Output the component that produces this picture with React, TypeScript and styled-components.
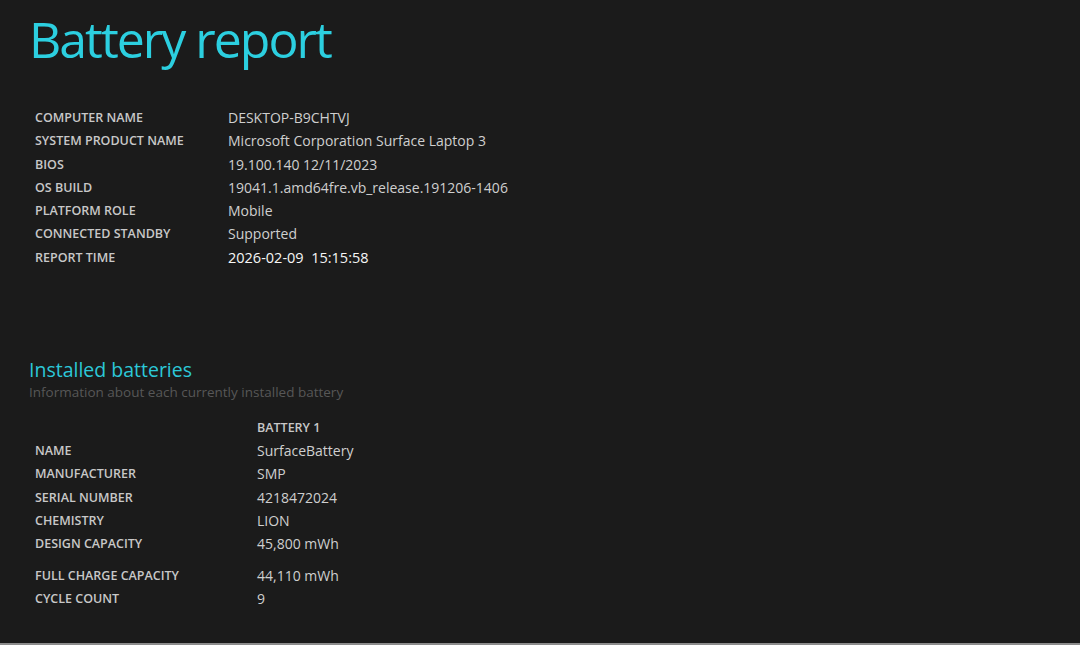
import React from "react";
import styled, { createGlobalStyle } from "styled-components";

const Global = createGlobalStyle`
  html, body { margin: 0; padding: 0; background: #1b1b1b; }
  body { font-family: "Open Sans", "Noto Sans", sans-serif; }
`;

const Page = styled.div`
  box-sizing: border-box;
  height: 645px;
  background: #1b1b1b;
  border-bottom: 2px solid #8c8c8c;
  padding: 6px 0 0 0;
  overflow: hidden;
`;

const Title = styled.h1`
  margin: 0 0 0 29px;
  font-family: "Open Sans", sans-serif;
  font-weight: 400;
  font-size: 50px;
  line-height: 66px;
  color: #2ccfe0;
  letter-spacing: -2px;
`;

const TitleGap = styled.div`
  height: 34px;
`;

const InfoTable = styled.div<{ $labelWidth: number }>`
  display: grid;
  grid-template-columns: ${(p) => p.$labelWidth}px auto;
  justify-content: start;
  padding-left: 35px;
`;

const Label = styled.div<{ $gapTop?: number }>`
  font-family: "Open Sans", sans-serif;
  font-weight: 600;
  font-size: 12.5px;
  line-height: 23.3px;
  color: #c8c8c8;
  text-transform: uppercase;
  margin-top: ${(p) => p.$gapTop ?? 0}px;
`;

const Value = styled.div<{ $bright?: boolean; $gapTop?: number }>`
  font-family: "Open Sans", sans-serif;
  font-weight: ${(p) => (p.$bright ? 500 : 400)};
  font-size: ${(p) => (p.$bright ? 14.5 : 14)}px;
  line-height: 23.3px;
  color: ${(p) => (p.$bright ? "#f6f6f6" : "#cfcfcf")};
  margin-top: ${(p) => p.$gapTop ?? 0}px;
  white-space: nowrap;
`;

const Section = styled.section`
  margin-top: 89px;
`;

const SectionTitle = styled.h2`
  margin: 0 0 0 29px;
  font-family: "Open Sans", sans-serif;
  font-weight: 400;
  font-size: 19.5px;
  line-height: 24px;
  color: #2cc8d8;
`;

const SectionSub = styled.div`
  margin: 0 0 14px 29px;
  font-family: "Open Sans", sans-serif;
  font-size: 13.5px;
  line-height: 20px;
  color: #575757;
`;

const ColHeader = styled.div`
  font-family: "Open Sans", sans-serif;
  font-weight: 600;
  font-size: 12.5px;
  line-height: 23px;
  color: #c8c8c8;
`;

const EmptyCell = styled.div``;

const sysInfo: [string, string][] = [
  ["Computer name", "DESKTOP-B9CHTVJ"],
  ["System product name", "Microsoft Corporation Surface Laptop 3"],
  ["BIOS", "19.100.140 12/11/2023"],
  ["OS build", "19041.1.amd64fre.vb_release.191206-1406"],
  ["Platform role", "Mobile"],
  ["Connected standby", "Supported"],
];

const battery: [string, string, number][] = [
  ["Name", "SurfaceBattery", 0],
  ["Manufacturer", "SMP", 0],
  ["Serial number", "4218472024", 0],
  ["Chemistry", "LION", 0],
  ["Design capacity", "45,800 mWh", 0],
  ["Full charge capacity", "44,110 mWh", 8],
  ["Cycle count", "9", 0],
];

export default function App() {
  return (
    <Page>
      <Global />
      <Title>Battery report</Title>
      <TitleGap />
      <InfoTable $labelWidth={193}>
        {sysInfo.map(([l, v]) => (
          <React.Fragment key={l}>
            <Label>{l}</Label>
            <Value>{v}</Value>
          </React.Fragment>
        ))}
        <Label>Report time</Label>
        <Value $bright>2026-02-09&nbsp;&nbsp;15:15:58</Value>
      </InfoTable>
      <Section>
        <SectionTitle>Installed batteries</SectionTitle>
        <SectionSub>Information about each currently installed battery</SectionSub>
        <InfoTable $labelWidth={222}>
          <EmptyCell />
          <ColHeader>BATTERY 1</ColHeader>
          {battery.map(([l, v, g]) => (
            <React.Fragment key={l}>
              <Label $gapTop={g}>{l}</Label>
              <Value $gapTop={g}>{v}</Value>
            </React.Fragment>
          ))}
        </InfoTable>
      </Section>
    </Page>
  );
}
